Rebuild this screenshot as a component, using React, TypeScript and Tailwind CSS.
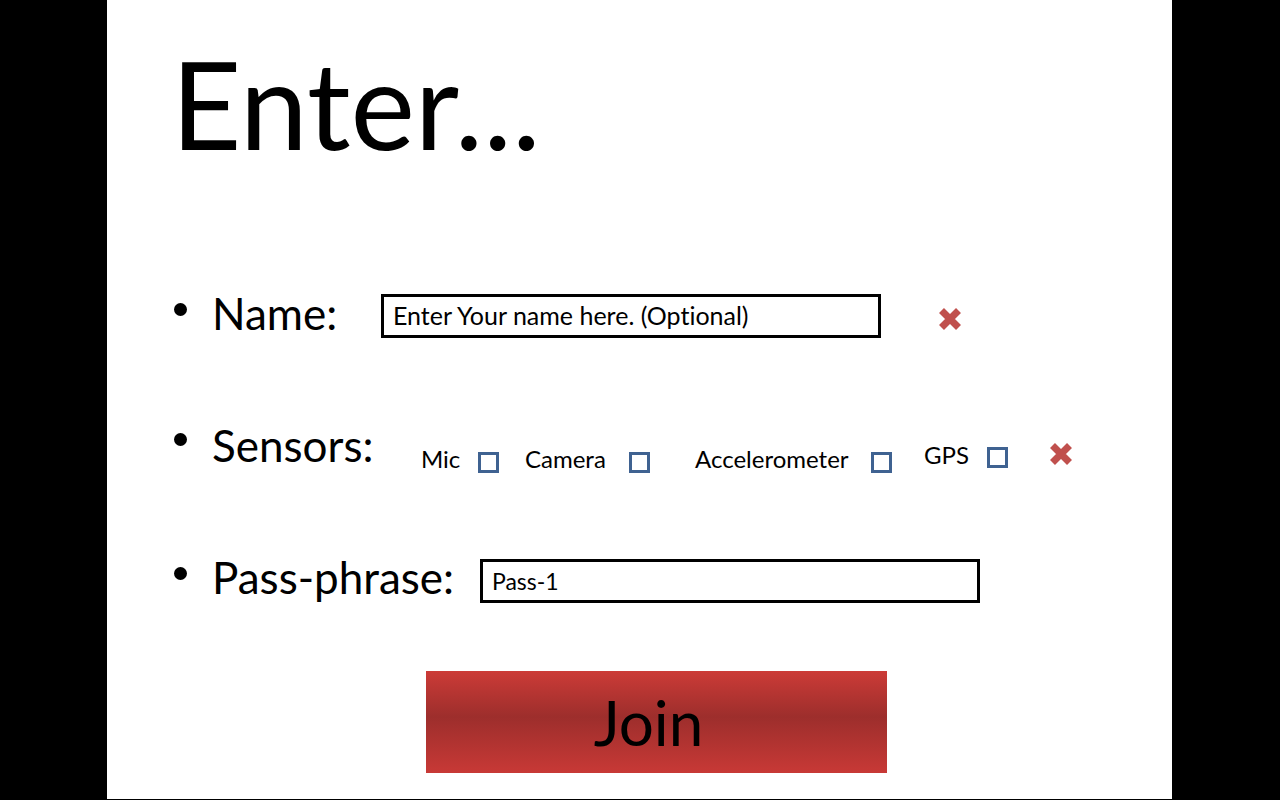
import React from 'react';

function RedX() {
    return (
        <svg width="24" height="24" viewBox="0 0 24 24" className="shrink-0">
            <path d="M3.5 3.5 L20.5 20.5 M20.5 3.5 L3.5 20.5" stroke="#c0504d" strokeWidth="7" />
        </svg>
    );
}

function Box() {
    return <span className="block w-[21px] h-[21px] border-[3px] border-[#3f6291] shrink-0" />;
}

function Bullet({ top }: { top: string }) {
    return <span className={`w-[13px] h-[13px] rounded-full bg-black shrink-0 ${top}`} />;
}

export default function App() {
    return (
        <div className="min-h-screen bg-black font-['Lato',sans-serif] text-black [font-variant-ligatures:none]">
            <div className="ml-[107px] w-[1065px] h-[799px] bg-white flex flex-col">
                {/* Title */}
                <h1 className="ml-[64px] mt-[42px] text-[122px] leading-none">Enter...</h1>

                {/* Name */}
                <div className="flex items-start mt-[126px] ml-[67px]">
                    <Bullet top="mt-[13px]" />
                    <span className="ml-[25px] w-[169px] mt-[1px] text-[44px] leading-none">Name:</span>
                    <div className="mt-[4px] w-[500px] h-[44px] border-[3px] border-black flex items-center pl-[9px] text-[25px]">
                        Enter Your name here. (Optional)
                    </div>
                    <div className="ml-[57px] mt-[17px]"><RedX /></div>
                </div>

                {/* Sensors */}
                <div className="flex items-start mt-[82px] ml-[67px]">
                    <Bullet top="mt-[13px]" />
                    <span className="ml-[25px] w-[209px] mt-[3px] text-[44px] leading-none">Sensors:</span>
                    <span className="w-[57px] mt-[27px] text-[24px] leading-none">Mic</span>
                    <span className="mt-[32px]"><Box /></span>
                    <span className="ml-[26px] w-[104px] mt-[27px] text-[24px] leading-none">Camera</span>
                    <span className="mt-[32px]"><Box /></span>
                    <span className="ml-[45px] w-[176px] mt-[27px] text-[24px] leading-none">Accelerometer</span>
                    <span className="mt-[32px]"><Box /></span>
                    <span className="ml-[32px] w-[63px] mt-[23px] text-[24px] leading-none">GPS</span>
                    <span className="mt-[27px]"><Box /></span>
                    <span className="ml-[41px] mt-[22px]"><RedX /></span>
                </div>

                {/* Pass-phrase */}
                <div className="flex items-start mt-[82px] ml-[67px]">
                    <Bullet top="mt-[12px]" />
                    <span className="ml-[25px] w-[268px] mt-[0px] text-[44px] leading-none">Pass-phrase:</span>
                    <div className="mt-[4px] w-[500px] h-[44px] border-[3px] border-black flex items-center pl-[9px] text-[23px]">
                        Pass-1
                    </div>
                </div>

                {/* Join */}
                <button className="ml-[319px] mt-[68px] w-[461px] h-[102px] bg-[linear-gradient(to_bottom,#cc3b37_0%,#9d2e2c_45%,#c83936_100%)] flex items-center justify-center pr-[16px] text-[62px] leading-none text-black">
                    Join
                </button>
            </div>
        </div>
    );
}
